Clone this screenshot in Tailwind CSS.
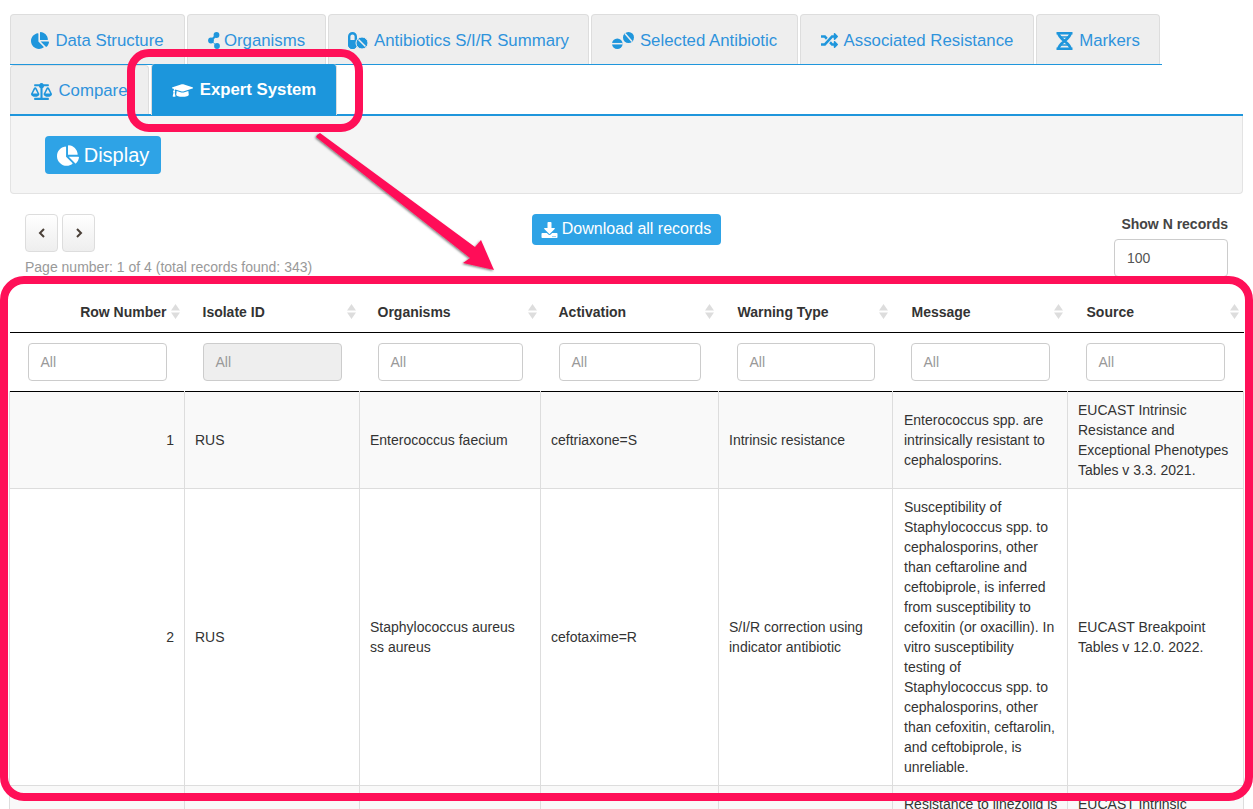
<!DOCTYPE html>
<html lang="en">
<head>
    <meta charset="UTF-8">
    <meta name="viewport" content="width=device-width, initial-scale=1.0">
    <script src="https://cdn.jsdelivr.net/npm/@tailwindcss/browser@4"></script>
    <title>Expert System</title>
</head>
<body class="bg-white">
<div class="relative w-[1253px] h-[809px] overflow-hidden font-['Liberation_Sans',Arial,sans-serif] text-[14px] leading-[20px] text-[#333]">

    <!-- tabs -->
    <div class="pt-[14px] pl-[10px]">
        <div class="flex gap-[2px] w-[1152px] h-[51px] border-b border-[#1f96dc] text-[16.8px] text-[#2f93dc]">
            <div class="w-[175px] h-[50px] pt-[2px] flex items-center justify-center gap-[6px] bg-[#eee] border border-b-0 border-[#ddd] rounded-t-[4px]">
                <svg class="w-[18px] h-[17px] fill-[#1f96dc]" viewBox="0 0 544 512"><path d="M527.79 288H290.5l158.03 158.03c6.04 6.04 15.98 6.53 22.19.68 38.7-36.46 65.32-85.61 73.13-140.86 1.34-9.46-6.51-17.85-16.06-17.85zm-15.83-64.8C503.72 103.74 408.26 8.28 288.8.04 279.68-.59 272 7.1 272 16.24V240h223.77c9.14 0 16.82-7.68 16.19-16.8zM224 288V50.71c0-9.55-8.39-17.4-17.84-16.06C86.99 51.49-4.1 155.6.14 280.37 4.5 408.51 114.83 513.59 243.03 511.98c50.4-.63 96.97-16.87 135.26-44.03 7.9-5.6 8.42-17.23 1.57-24.08L224 288z"/></svg>
                <span>Data Structure</span>
            </div>
            <div class="w-[139px] h-[50px] pt-[2px] flex items-center justify-center gap-[3px] bg-[#eee] border border-b-0 border-[#ddd] rounded-t-[4px]">
                <svg class="w-[13px] h-[17px] fill-[#1f96dc]" viewBox="0 0 13 17"><circle cx="8.500" cy="3" r="2.900"/><circle cx="3" cy="8.500" r="2.900"/><circle cx="9" cy="14" r="2.900"/><path d="M8.500 3 3 8.500" stroke="#1f96dc" stroke-width="2.200"/><path d="M3 8.500 9 14" stroke="#1f96dc" stroke-width="0.800"/></svg>
                <span>Organisms</span>
            </div>
            <div class="w-[261px] h-[50px] pt-[2px] flex items-center justify-center gap-[6px] bg-[#eee] border border-b-0 border-[#ddd] rounded-t-[4px]">
                <svg class="w-[20px] h-[17px]" viewBox="0 0 20 17"><rect x="1.200" y="1.200" width="6.600" height="14.600" rx="3.300" fill="none" stroke="#1f96dc" stroke-width="2.400"/><path d="M0 8h9v4.500a4.500 4.500 0 0 1-9 0z" fill="#1f96dc"/><circle cx="14" cy="11" r="6" fill="#1f96dc" stroke="#eee" stroke-width="1"/><path d="M10.500 7.500l7 7" stroke="#eee" stroke-width="1.500"/></svg>
                <span>Antibiotics S/I/R Summary</span>
            </div>
            <div class="w-[207px] h-[50px] pt-[2px] flex items-center justify-center gap-[6px] bg-[#eee] border border-b-0 border-[#ddd] rounded-t-[4px]">
                <svg class="w-[22px] h-[17px]" viewBox="0 0 22 17"><circle cx="5.300" cy="11.700" r="5.300" fill="#1f96dc"/><path d="M0 11.700h10.600" stroke="#eee" stroke-width="1.500"/><circle cx="16.500" cy="5.500" r="5.500" fill="#1f96dc"/><path d="M13 1.500l7 8" stroke="#eee" stroke-width="1.500"/></svg>
                <span>Selected Antibiotic</span>
            </div>
            <div class="w-[234px] h-[50px] pt-[2px] flex items-center justify-center gap-[6px] bg-[#eee] border border-b-0 border-[#ddd] rounded-t-[4px]">
                <svg class="w-[17px] h-[17px] fill-[#1f96dc]" viewBox="0 0 512 512"><path d="M504.971 359.029c9.373 9.373 9.373 24.569 0 33.941l-80 79.984c-15.01 15.01-40.971 4.49-40.971-16.971V416h-58.785a12.004 12.004 0 0 1-8.773-3.812l-70.556-75.596 53.333-57.143L352 336h32v-39.981c0-21.438 25.943-32.004 40.971-16.971l80 79.981zM12 176h84l52.781 56.551 53.333-57.143-70.556-75.596A11.999 11.999 0 0 0 122.785 96H12c-6.627 0-12 5.373-12 12v56c0 6.627 5.373 12 12 12zm372 0v39.984c0 21.46 25.961 31.98 40.971 16.971l80-79.984c9.373-9.373 9.373-24.569 0-33.941l-80-79.981C409.943 24.021 384 34.582 384 56.019V96h-58.785a12.004 12.004 0 0 0-8.773 3.812L96 336H12c-6.627 0-12 5.373-12 12v56c0 6.627 5.373 12 12 12h110.785c3.326 0 6.503-1.381 8.773-3.812L352 176h32z"/></svg>
                <span>Associated Resistance</span>
            </div>
            <div class="w-[124px] h-[50px] pt-[2px] flex items-center justify-center gap-[6px] bg-[#eee] border border-b-0 border-[#ddd] rounded-t-[4px]">
                <svg class="w-[17px] h-[18px]" viewBox="0 0 17 18" fill="none" stroke="#1f96dc"><path d="M.5 1.200h16M.5 16.800h16" stroke-width="2.400"/><path d="M2.500 1c0 6.500 12 9.500 12 16M14.500 1c0 6.500-12 9.500-12 16" stroke-width="2.800"/><path d="M4 5h9M4 13h9" stroke-width="1.600"/></svg>
                <span>Markers</span>
            </div>
        </div>

        <div class="flex gap-[2px] w-[1233px] h-[51px] border-b-2 border-[#1f96dc] text-[16.8px]">
            <div class="w-[139px] h-[49px] pt-[2px] flex items-center justify-center gap-[6px] bg-[#eee] border border-b-0 border-[#ddd] rounded-t-[4px] text-[#2f93dc]">
                <svg class="w-[21px] h-[17px] fill-[#1f96dc]" viewBox="0 0 640 512"><path d="M256 336h-.02c0-16.18 1.34-8.73-85.05-181.51-17.65-35.29-68.19-35.36-85.87 0C-2.06 328.75.02 320.33.02 336H0c0 44.18 57.31 80 128 80s128-35.82 128-80zM128 176l72 144H56l72-144zm511.98 160c0-16.18 1.34-8.73-85.05-181.51-17.65-35.29-68.19-35.36-85.87 0-87.12 174.26-85.04 165.84-85.04 181.51H384c0 44.18 57.31 80 128 80s128-35.82 128-80h-.02zM440 320l72-144 72 144H440zm88 128H352V153.25c23.51-10.29 41.16-31.48 46.39-57.25H528c8.84 0 16-7.16 16-16V48c0-8.84-7.16-16-16-16H383.64C369.04 12.68 346.09 0 320 0s-49.04 12.68-63.64 32H112c-8.84 0-16 7.16-16 16v32c0 8.84 7.16 16 16 16h129.61c5.23 25.76 22.87 46.96 46.39 57.25V448H112c-8.84 0-16 7.16-16 16v32c0 8.84 7.16 16 16 16h416c8.84 0 16-7.16 16-16v-32c0-8.84-7.16-16-16-16z"/></svg>
                <span>Compare</span>
            </div>
            <div class="w-[186px] h-[51px] -mt-[1px] pt-[1px] flex items-center justify-center gap-[7px] bg-[#1c96dc] border-l border-r border-[#ddd] rounded-t-[4px] text-white font-bold">
                <svg class="w-[21px] h-[17px] fill-white" viewBox="0 0 640 512"><path d="M622.34 153.2L343.4 67.5c-15.2-4.67-31.6-4.67-46.79 0L17.66 153.2c-23.54 7.23-23.54 38.36 0 45.59l48.63 14.94c-10.67 13.19-17.23 29.28-17.88 46.9C38.78 266.15 32 276.11 32 288c0 10.78 5.68 19.85 13.86 25.65L20.33 428.53C18.11 438.52 25.71 448 35.94 448h56.11c10.24 0 17.84-9.48 15.62-19.47L82.14 313.65C90.32 307.85 96 298.78 96 288c0-11.57-6.47-21.25-15.66-26.87.76-15.02 8.44-28.3 20.69-36.72L296.6 284.5c9.06 2.78 26.44 6.25 46.79 0l278.95-85.7c23.55-7.24 23.55-38.36 0-45.6zM352.79 315.09c-28.53 8.76-52.84 3.92-65.59 0l-145.02-44.55L128 384c0 35.35 85.96 64 192 64s192-28.65 192-64l-14.18-113.47-145.03 44.56z"/></svg>
                <span>Expert System</span>
            </div>
        </div>

        <!-- display panel -->
        <div class="w-[1233px] h-[78px] pt-[20px] pl-[34px] bg-[#f5f5f5] border border-t-0 border-[#e3e3e3] rounded-b-[4px]">
            <div class="w-[116px] h-[38px] flex items-center justify-center gap-[5px] bg-[#2ea3e6] rounded-[4px] text-white text-[20px]">
                <svg class="w-[22px] h-[21px] fill-white" viewBox="0 0 544 512"><path d="M527.79 288H290.5l158.03 158.03c6.04 6.04 15.98 6.53 22.19.68 38.7-36.46 65.32-85.61 73.13-140.86 1.34-9.46-6.51-17.85-16.06-17.85zm-15.83-64.8C503.72 103.74 408.26 8.28 288.8.04 279.68-.59 272 7.1 272 16.24V240h223.77c9.14 0 16.82-7.68 16.19-16.8zM224 288V50.71c0-9.55-8.39-17.4-17.84-16.06C86.99 51.49-4.1 155.6.14 280.37 4.5 408.51 114.83 513.59 243.03 511.98c50.4-.63 96.97-16.87 135.26-44.03 7.9-5.6 8.42-17.23 1.57-24.08L224 288z"/></svg>
                <span>Display</span>
            </div>
        </div>

        <!-- pager and controls -->
        <div class="flex w-[1233px] h-[97px] pt-[20px]">
            <div class="w-[522px] pl-[15px]">
                <div class="flex gap-[4px]">
                    <div class="w-[33px] h-[38px] flex items-center justify-center bg-gradient-to-b from-white to-[#eee] border border-[#ddd] rounded-[4px]">
                        <svg class="w-[8px] h-[10px]" viewBox="0 0 8 10" fill="none" stroke="#4a4038" stroke-width="2"><path d="M6 1 2 5l4 4"/></svg>
                    </div>
                    <div class="w-[33px] h-[38px] flex items-center justify-center bg-gradient-to-b from-white to-[#eee] border border-[#ddd] rounded-[4px]">
                        <svg class="w-[8px] h-[10px]" viewBox="0 0 8 10" fill="none" stroke="#4a4038" stroke-width="2"><path d="M2 1l4 4-4 4"/></svg>
                    </div>
                </div>
                <p class="mt-[5px] text-[#999] whitespace-nowrap">Page number: 1 of 4 (total records found: 343)</p>
            </div>
            <div class="w-[582px]">
                <div class="w-[189px] h-[31px] pr-[1px] flex items-center justify-center gap-[4px] bg-[#2ea3e6] rounded-[4px] text-white text-[16px]">
                    <svg class="w-[17px] h-[16px] fill-white" viewBox="0 0 512 512"><path d="M216 0h80c13.3 0 24 10.7 24 24v168h87.7c17.8 0 26.7 21.5 14.1 34.1L269.7 378.3c-7.5 7.5-19.8 7.5-27.3 0L90.1 226.1c-12.6-12.6-3.7-34.1 14.1-34.1H192V24c0-13.3 10.7-24 24-24zm296 376v112c0 13.3-10.7 24-24 24H24c-13.3 0-24-10.7-24-24V376c0-13.3 10.7-24 24-24h146.7l49 49c20.1 20.1 52.5 20.1 72.6 0l49-49H488c13.3 0 24 10.7 24 24zm-124 88c0-11-9-20-20-20s-20 9-20 20 9 20 20 20 20-9 20-20zm64 0c0-11-9-20-20-20s-20 9-20 20 9 20 20 20 20-9 20-20z"/></svg>
                    <span class="pb-[2px]">Download all records</span>
                </div>
            </div>
            <div class="w-[114px]">
                <p class="font-bold text-[#444] text-right whitespace-nowrap">Show N records</p>
                <div class="mt-[5px] w-[114px] h-[38px] pl-[12px] flex items-center bg-white border border-[#ccc] rounded-[4px] text-[#555]">100</div>
            </div>
        </div>

        <!-- results table -->
        <table class="table-fixed border-collapse w-[1234px] -mt-[1px] -ml-[1px]">
            <colgroup>
                <col class="w-[175px]"><col class="w-[175px]"><col class="w-[181px]"><col class="w-[178px]"><col class="w-[174px]"><col class="w-[175px]"><col class="w-[176px]">
            </colgroup>
            <thead>
                <tr class="h-[42px] border-b border-black font-bold text-[#333]">
                    <th class="pr-[5px] pt-[2px]"><div class="flex justify-end items-center gap-[4px]"><span>Row Number</span><svg class="w-[9px] h-[15px] fill-[#ddd]" viewBox="0 0 9 15"><path d="M4.5 0 9 6.500H0zM4.500 15 0 8.500h9z"/></svg></div></th>
                    <th class="pl-[18px] pr-[4px] pt-[2px]"><div class="flex justify-between items-center"><span>Isolate ID</span><svg class="w-[9px] h-[15px] fill-[#ddd]" viewBox="0 0 9 15"><path d="M4.5 0 9 6.500H0zM4.500 15 0 8.500h9z"/></svg></div></th>
                    <th class="pl-[18px] pr-[4px] pt-[2px]"><div class="flex justify-between items-center"><span>Organisms</span><svg class="w-[9px] h-[15px] fill-[#ddd]" viewBox="0 0 9 15"><path d="M4.5 0 9 6.500H0zM4.500 15 0 8.500h9z"/></svg></div></th>
                    <th class="pl-[18px] pr-[5px] pt-[2px]"><div class="flex justify-between items-center"><span>Activation</span><svg class="w-[9px] h-[15px] fill-[#ddd]" viewBox="0 0 9 15"><path d="M4.5 0 9 6.500H0zM4.500 15 0 8.500h9z"/></svg></div></th>
                    <th class="pl-[19px] pr-[5px] pt-[2px]"><div class="flex justify-between items-center"><span>Warning Type</span><svg class="w-[9px] h-[15px] fill-[#ddd]" viewBox="0 0 9 15"><path d="M4.5 0 9 6.500H0zM4.500 15 0 8.500h9z"/></svg></div></th>
                    <th class="pl-[19px] pr-[5px] pt-[2px]"><div class="flex justify-between items-center"><span>Message</span><svg class="w-[9px] h-[15px] fill-[#ddd]" viewBox="0 0 9 15"><path d="M4.5 0 9 6.500H0zM4.500 15 0 8.500h9z"/></svg></div></th>
                    <th class="pl-[19px] pr-[5px] pt-[2px]"><div class="flex justify-between items-center"><span>Source</span><svg class="w-[9px] h-[15px] fill-[#ddd]" viewBox="0 0 9 15"><path d="M4.5 0 9 6.500H0zM4.500 15 0 8.500h9z"/></svg></div></th>
                </tr>
                <tr class="h-[59px] border-b border-black text-[#999]">
                    <td class="pl-[18px] pr-[18px]"><div class="h-[38px] pl-[12px] flex items-center bg-white border border-[#ccc] rounded-[4px]">All</div></td>
                    <td class="pl-[18px] pr-[18px]"><div class="h-[38px] pl-[12px] flex items-center bg-[#eee] border border-[#ccc] rounded-[4px]">All</div></td>
                    <td class="pl-[18px] pr-[18px]"><div class="h-[38px] pl-[12px] flex items-center bg-white border border-[#ccc] rounded-[4px]">All</div></td>
                    <td class="pl-[18px] pr-[18px]"><div class="h-[38px] pl-[12px] flex items-center bg-white border border-[#ccc] rounded-[4px]">All</div></td>
                    <td class="pl-[18px] pr-[18px]"><div class="h-[38px] pl-[12px] flex items-center bg-white border border-[#ccc] rounded-[4px]">All</div></td>
                    <td class="pl-[18px] pr-[18px]"><div class="h-[38px] pl-[12px] flex items-center bg-white border border-[#ccc] rounded-[4px]">All</div></td>
                    <td class="pl-[18px] pr-[19px]"><div class="h-[38px] pl-[12px] flex items-center bg-white border border-[#ccc] rounded-[4px]">All</div></td>
                </tr>
            </thead>
            <tbody>
                <tr class="h-[97px] bg-[#f9f9f9] [&>td]:border [&>td]:border-t-0 [&>td]:border-[#ddd] [&>td]:px-[10px]">
                    <td class="text-right">1</td>
                    <td>RUS</td>
                    <td>Enterococcus faecium</td>
                    <td>ceftriaxone=S</td>
                    <td>Intrinsic resistance</td>
                    <td class="!pl-[11px]">Enterococcus spp. are intrinsically resistant to cephalosporins.</td>
                    <td>EUCAST Intrinsic Resistance and Exceptional Phenotypes Tables v 3.3. 2021.</td>
                </tr>
                <tr class="h-[297px] [&>td]:border [&>td]:border-[#ddd] [&>td]:px-[10px]">
                    <td class="text-right">2</td>
                    <td>RUS</td>
                    <td>Staphylococcus aureus ss aureus</td>
                    <td>cefotaxime=R</td>
                    <td>S/I/R correction using indicator antibiotic</td>
                    <td class="!pl-[11px]">Susceptibility of Staphylococcus spp. to cephalosporins, other than ceftaroline and ceftobiprole, is inferred from susceptibility to cefoxitin (or oxacillin). In vitro susceptibility testing of Staphylococcus spp. to cephalosporins, other than cefoxitin, ceftarolin, and ceftobiprole, is unreliable.</td>
                    <td>EUCAST Breakpoint Tables v 12.0. 2022.</td>
                </tr>
                <tr class="bg-[#f9f9f9] align-top [&>td]:border [&>td]:border-[#ddd] [&>td]:px-[10px] [&>td]:pt-[8px]">
                    <td></td><td></td><td></td><td></td><td></td>
                    <td class="!pl-[11px] whitespace-nowrap">Resistance to linezolid is</td>
                    <td>EUCAST Intrinsic</td>
                </tr>
            </tbody>
        </table>
    </div>

    <!-- annotation drawn over the page -->
    <svg class="absolute inset-0 w-[1253px] h-[809px] pointer-events-none" viewBox="0 0 1253 809">
        <defs><filter id="sh" x="-10%" y="-10%" width="120%" height="120%"><feDropShadow dx="-1" dy="1" stdDeviation="1.200" flood-color="#000" flood-opacity="0.500"/></filter></defs>
        <rect x="131" y="53" width="228" height="75" rx="18" fill="none" stroke="#ff1058" stroke-width="8"/>
        <rect x="4" y="280" width="1245" height="517" rx="20" fill="none" stroke="#ff1058" stroke-width="8"/>
        <path d="M317 135 320 133 475 247 481 240 494 270 463 263 470 258 316 137Z" fill="#ff1058" filter="url(#sh)"/>
    </svg>
</div>
</body>
</html>
